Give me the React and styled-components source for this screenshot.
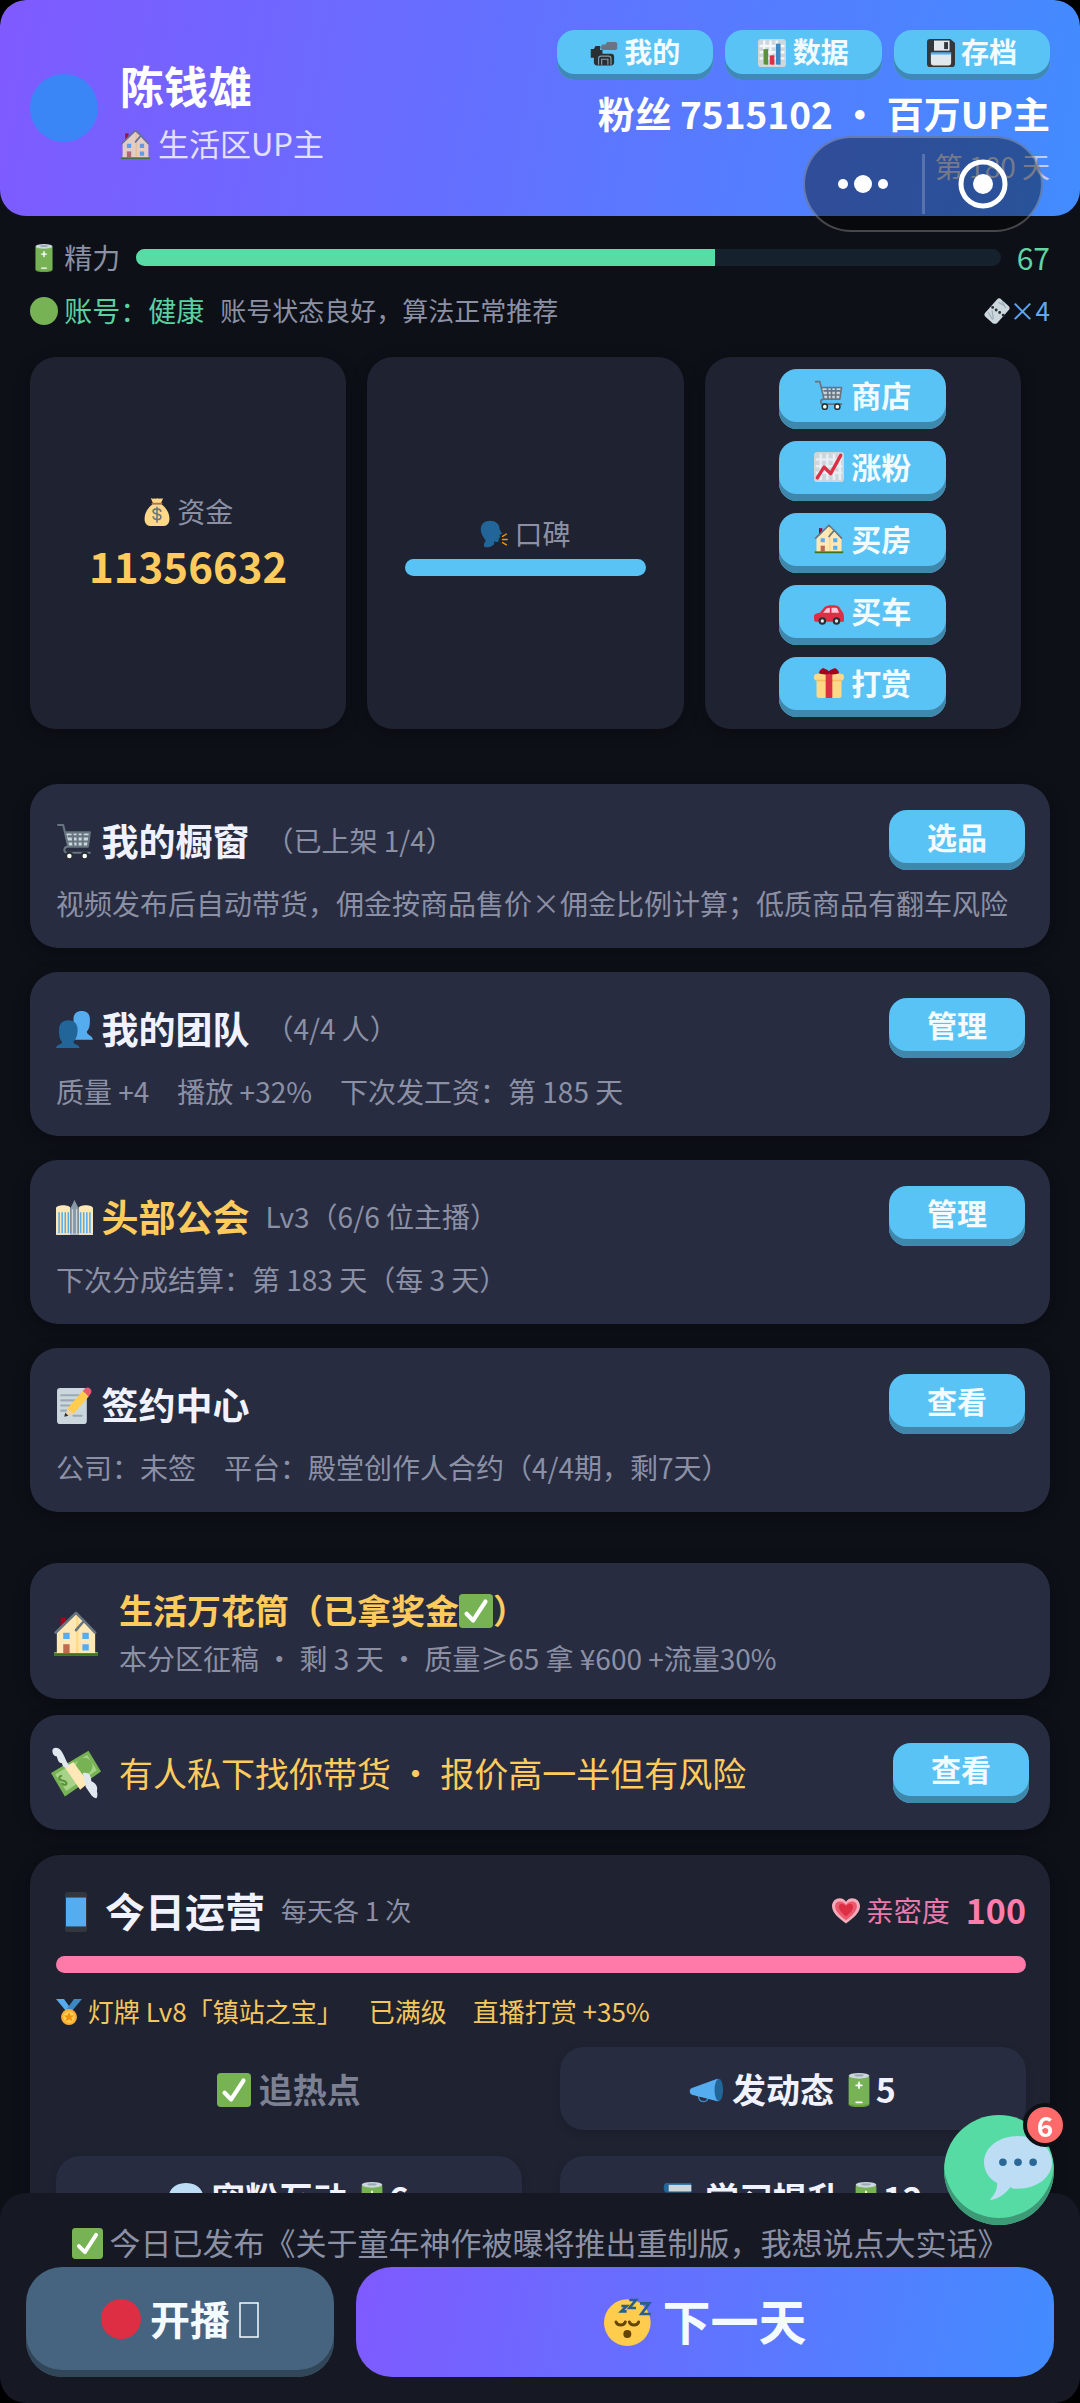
import React from 'react';
import styled, { createGlobalStyle, css } from 'styled-components';

const GlobalStyle = createGlobalStyle`
  * {
    box-sizing: border-box;
  }

  body {
    margin: 0;
    background: #000;
    color: #f0f2ff;
    font-family: 'Noto Sans CJK SC', 'Noto Sans', sans-serif;
    font-size: 28px;
    text-spacing-trim: space-all;
  }

  button {
    margin: 0;
    border: 0;
    font-family: inherit;
    cursor: pointer;
  }

  h1, h2, p {
    margin: 0;
  }
`;

/* ---------- emoji ---------- */

const houseArt = (
  <>
    <path fill="#77b255" d="M1 32h34v3H1z" />
    <path fill="#a0041e" d="M6 5h4v9H6z" />
    <path fill="#ffe8b6" d="M3 17 18 2l4 4 11 12v15H3z" />
    <path fill="#ffcc4d" opacity=".45" d="M18 2v31h2V2z" />
    <path fill="none" stroke="#66757f" strokeWidth="2" strokeLinecap="round" strokeLinejoin="round" d="M2 17 18 1.500l6 6L33 17M24 8l-6 7" />
    <path fill="#55acee" d="M8 17h5v5H8zM23 17h5v5h-5zM23 26h5v5h-5z" />
    <path fill="#c1694f" d="M8 26h5v7H8z" />
    <path fill="#3e721d" d="M1 33h34v2H1z" />
  </>
);

const art = {
  camera: (
    <>
      <path fill="#292f33" d="M1 13h4l2-4h6v5h3v8H7l-2 2H1z" />
      <rect fill="#292f33" x="5" y="19" width="26" height="15" rx="4" />
      <path fill="#66757f" d="M16 7h4l2-3h11l2 1v8l-2 1H16l-3-3z" />
      <path fill="none" stroke="#8899a6" strokeWidth="1.500" d="M11 33v-8a3 3 0 0 1 3-3h10a3 3 0 0 1 3 3v8M15 33v-7h8v7" />
    </>
  ),
  bars: (
    <>
      <rect fill="#ccd6dd" width="36" height="36" rx="4" />
      <path stroke="#f5f8fa" strokeWidth="3" d="M8 2v32M16 2v32M24 2v32M2 9h32M2 17h32M2 25h32" />
      <path fill="#5c913b" d="M7 13h6v20H7z" />
      <path fill="#dd2e44" d="M15 21h6v12h-6z" />
      <path fill="#3b88c3" d="M23 6h6v27h-6z" />
    </>
  ),
  floppy: (
    <>
      <path fill="#31373d" d="M4 0h26l6 5v27a4 4 0 0 1-4 4H4a4 4 0 0 1-4-4V4a4 4 0 0 1 4-4z" />
      <path fill="#e1e8ed" d="M9 2h20v13H9z" />
      <path fill="#31373d" d="M22 4h5v9h-5z" />
      <path fill="#e1e8ed" d="M5 18h26v13a3 3 0 0 1-3 3H8a3 3 0 0 1-3-3z" />
      <path fill="#55acee" d="M5 17h26v3H5z" />
    </>
  ),
  house: houseArt,
  battery: (
    <>
      <path fill="#77b255" d="M7 4h22v29c0 4-22 4-22 0z" />
      <path fill="#3e721d" opacity=".3" d="M7 32c3 3 19 3 22 0v2c-3 3-19 3-22 0z" />
      <ellipse fill="#ccd6dd" cx="18" cy="3" rx="11" ry="3" />
      <ellipse fill="#99aab5" cx="18" cy="2.500" rx="5" ry="1.300" />
      <path stroke="#fff" strokeWidth="1.800" strokeLinecap="round" d="M18 10v6M15 13h6M15 31h6" />
    </>
  ),
  green: <circle fill="#77b255" cx="18" cy="18" r="18" />,
  red: <circle fill="#dd2e44" cx="18" cy="18" r="18" />,
  ticket: (
    <>
      <path fill="#ccd6dd" d="M18 2c2-2 4-2 6 0l10 9c2 2 2 4 0 6L18 35c-2 1-4 1-6 0L2 26c-2-2-2-4 0-6z" />
      <path stroke="#99aab5" strokeWidth="1.500" d="m6 20 6 10M11 17l2 12M20 6l7 4M25 5l5 9" />
      <path stroke="#292f33" strokeWidth="4" strokeLinecap="round" strokeDasharray="0 6" d="m12 13 15 11" />
    </>
  ),
  money: (
    <>
      <path fill="#fdd888" d="M12 8C6 13 2 19 2 27c0 5 3 9 7 9h18c4 0 7-4 7-9 0-8-4-14-10-19z" />
      <path fill="#fdd888" d="M10 0c3 2 4 0 6 1 2-1 3-1 5 0 2-1 3 1 5-1l-3 7H13z" />
      <path fill="none" stroke="#bf6952" strokeWidth="2" strokeLinecap="round" d="M12 7h12" />
      <path fill="none" stroke="#67757f" strokeWidth="2" strokeLinecap="round" d="M23 17c-1-4-10-4-10 0 0 5 10 2 10 7 0 5-9 5-10 0M18 12v19" />
    </>
  ),
  speaking: (
    <>
      <path fill="#226699" d="M1 12C1 5 6 1 13 1s12 4 12 10c0 3 4 5 3 7l-3 1 1 3-2 2v3c-1 2-4 1-6 1 0 2 1 3-1 4-3 3-6 3-9 3-2 0-3-1-3-3 0-3 3-4 2-6-2-3-6-8-6-14z" />
      <path stroke="#f4900c" strokeWidth="1.800" strokeLinecap="round" d="m29 21 5-3M29 25h6M29 29l5 3" />
    </>
  ),
  cart: (
    <>
      <path fill="#ccd6dd" d="M9 10h24l-2 13H12z" />
      <path fill="none" stroke="#66757f" strokeWidth="2" strokeLinecap="round" strokeLinejoin="round" d="M2 2h5l5 21h19l2-14H9M12 13h20M12 18h20M16 9l1 14M21 9v14M26 9v14M12 23c-5 0-5 6-1 6h22" />
      <circle fill="#292f33" cx="13" cy="32" r="4" />
      <circle fill="#292f33" cx="28" cy="32" r="4" />
      <circle fill="#fff" cx="13" cy="32" r="2.200" />
      <circle fill="#fff" cx="28" cy="32" r="2.200" />
    </>
  ),
  trend: (
    <>
      <rect fill="#ccd6dd" width="36" height="36" rx="4" />
      <path stroke="#e8eef2" strokeWidth="3" d="M8 2v32M16 2v32M24 2v32M31 2v32M2 9h32M2 17h32M2 25h32" />
      <path fill="none" stroke="#dd2e44" strokeWidth="4" strokeLinecap="round" strokeLinejoin="round" d="m4 31 8-13 8 8L32 4" />
    </>
  ),
  car: (
    <>
      <path fill="#dd2e44" d="m7 20 6-7c2-2 13-3 17 0l4 6c2 2 2 6 2 10 0 2-1 2-2 2H2c-2 0-2-4-2-6 0-4 3-4 7-5z" />
      <path fill="#ffc8d6" d="m11 20 4-5 4-1v6zM21 14c3 0 6 0 7 1l2 5h-9z" />
      <circle fill="#292f33" cx="10" cy="30" r="4.500" />
      <circle fill="#292f33" cx="27" cy="30" r="4.500" />
      <circle fill="#e1e8ed" cx="10" cy="30" r="2" />
      <circle fill="#e1e8ed" cx="27" cy="30" r="2" />
    </>
  ),
  gift: (
    <>
      <rect fill="#fdd888" x="3" y="13" width="30" height="23" rx="3" />
      <rect fill="#fdd888" y="7" width="36" height="8" rx="4" />
      <path fill="#f4ab4b" opacity=".6" d="M3 14h30v2H3z" />
      <path fill="#dd2e44" d="M14 6h8v30h-8z" />
      <path fill="#a0041e" d="M18 7c-4 1-9 1-12-1 0-2 2-5 5-6 1 1 4 1 7 4 3-3 6-3 7-4 3 1 5 4 5 6-3 2-8 2-12 1z" />
    </>
  ),
  team: (
    <>
      <path fill="#55acee" d="M17 8c0-5 3-8 8-8s8 3 8 8c0 4 0 9-3 12 0 4 5 3 6 8H18z" />
      <path fill="#226699" d="M3 18c0-6 4-9 9-9s9 3 9 9c0 5-1 9-4 12 0 3 5 2 6 6H0c1-4 6-3 6-6-3-3-3-7-3-12z" />
    </>
  ),
  city: (
    <>
      <path fill="#ffe8b6" d="M0 9c0-4 14-4 14 0v26H0zM22 9c0-4 14-4 14 0v26H22z" />
      <path fill="#8899a6" d="m14 9 2-4 2-4 2 4 2 4v26h-8z" />
      <path stroke="#ccd6dd" strokeWidth="1.200" d="M16 10v24M20 10v24" />
      <path stroke="#55acee" strokeWidth="1.500" d="M3 13v20M6 13v20M9 13v20M12 13v20M24 13v20M27 13v20M30 13v20M33 13v20" />
      <path stroke="#d1d3d4" d="M0 34h36" />
    </>
  ),
  memo: (
    <>
      <rect fill="#ccd6dd" x="1" y="1" width="29" height="35" rx="3" />
      <path stroke="#99aab5" strokeWidth="2" strokeLinecap="round" d="M5 8h18M5 13h16M5 18h13M5 23h8M17 28h8" />
      <path fill="#ffcc4d" d="m11 21 15-17 6 5-15 17z" />
      <path fill="#ea596e" d="m26 4 3-3c3-2 7 2 5 5l-2 3z" />
      <path fill="#f3d2a2" d="m11 21 6 5-8 3z" />
      <path fill="#292f33" d="m9 25 3 3-4 1z" />
    </>
  ),
  check: (
    <>
      <rect fill="#77b255" width="36" height="36" rx="4" />
      <path fill="none" stroke="#fff" strokeWidth="4.500" strokeLinecap="round" strokeLinejoin="round" d="m8 21 7 7L28 8" />
    </>
  ),
  cash: (
    <>
      <path fill="#77b255" d="M0 18 27 2l9 15L10 35z" />
      <path fill="#a6d388" d="M3 19 26 5l7 11-22 15z" />
      <circle fill="#77b255" cx="24" cy="13" r="6" />
      <path fill="#ffe8b6" d="m10 14 6-4 11 15-6 5z" />
      <path fill="#e1e8ed" d="M1 2C1-1 6-1 8 3c3 5 3 8 6 10-4 3-6 0-6-2-3 0-3-3-4-5-2 0-3-2-3-4zM23 18c5-1 6 3 6 6 3 1 5 4 4 7 1 3 0 6-1 5-3-1-4-4-7-8z" />
      <path fill="none" stroke="#5c913b" strokeWidth="1.500" d="M8 20c-2 0-3 2-1 3s3 0 4 2-3 2-3 0" />
    </>
  ),
  phone: (
    <>
      <rect fill="#31373d" x="8" width="20" height="36" rx="3" />
      <path fill="#55acee" d="M9 5h18v26H9z" />
    </>
  ),
  heart: (
    <>
      <path fill="#f4abba" d="M18 34C9 28 0 20 0 12 0 1 13-2 18 6c5-8 18-5 18 6 0 8-9 16-18 22z" />
      <path fill="#ea596e" d="M18 30C10 24 4 18 4 12c0-8 10-8 14-2 4-6 14-6 14 2 0 6-6 12-14 18z" />
      <path fill="#dd2e44" d="M18 25c-5-4-9-8-9-12 0-6 7-5 9-1 2-4 9-5 9 1 0 4-4 8-9 12z" />
    </>
  ),
  medal: (
    <>
      <path fill="#55acee" d="M0 0h11l10 14-6 4z" />
      <path fill="#3b88c3" d="M36 0H25L14 15l7 3z" />
      <circle fill="#ffac33" cx="18" cy="25" r="11" />
      <circle fill="#ffcc4d" cx="18" cy="25" r="8" />
      <path fill="#f4900c" d="m18 18 2 5h5l-4 3 2 5-5-3-5 3 2-5-4-3h5z" />
    </>
  ),
  horn: (
    <>
      <path fill="none" stroke="#3b88c3" strokeWidth="1.500" d="M9 24c0 8 10 8 10 2" />
      <path fill="#55acee" d="M2 16 29 6c6 0 6 24 0 24L2 23c-3-1-3-6 0-7z" />
      <ellipse fill="#226699" cx="30.500" cy="18" rx="4.500" ry="12" />
    </>
  ),
  bubble: (
    <>
      <path fill="#bdddf4" d="M18 1c10 0 18 6 18 14s-8 14-18 14c-2 0-3 0-4-1-3 4-6 6-11 7 3-3 4-6 4-9C3 24 0 20 0 15 0 7 8 1 18 1z" />
      <circle fill="#2a6797" cx="10" cy="15" r="2" />
      <circle fill="#2a6797" cx="18" cy="15" r="2" />
      <circle fill="#2a6797" cx="26" cy="15" r="2" />
    </>
  ),
  books: (
    <>
      <path fill="#226699" d="M3 1h27v10H3C0 10 0 2 3 1z" />
      <path fill="#ccd6dd" d="M6 3h24v7H6z" />
      <path fill="#ffac33" d="M8 12h27v10H8z" />
      <path fill="#ccd6dd" d="M10 15h24v6H10z" />
      <path fill="#77b255" d="M2 23h30v12H2z" />
    </>
  ),
  sleep: (
    <>
      <circle fill="#ffcc4d" cx="17.500" cy="18.500" r="17.500" />
      <path fill="none" stroke="#664500" strokeWidth="2.200" strokeLinecap="round" d="M9 18c1 3 6 3 7 0M19 18c1 3 6 3 7 0" />
      <circle fill="#664500" cx="17.500" cy="27" r="3" />
      <path fill="none" stroke="#26608b" strokeWidth="2" d="M13 6h4l-4 4h4M19 1.500h5l-5 6h5M27 4h7l-6 8h7" />
    </>
  ),
};

const Svg = styled.svg`
  width: 1em;
  height: 1em;
  flex: none;
  vertical-align: -0.12em;
  overflow: visible;
`;

const MissingGlyph = styled(Svg)`
  width: 20px;
`;

const Emoji = ({ name }) => (
  <Svg viewBox="0 0 36 36" aria-hidden="true">{art[name]}</Svg>
);

/* ---------- layout ---------- */

const Screen = styled.div`
  height: 100vh;
  display: flex;
  flex-direction: column;
  background: #0d1017;
  border-radius: 26px;
  overflow: hidden;
`;

const Header = styled.header`
  flex: none;
  display: flex;
  justify-content: space-between;
  align-items: center;
  padding: 30px;
  border-radius: 26px;
  background: linear-gradient(100deg, #7f5aff, #428cff);
`;

const Profile = styled.div`
  display: flex;
  align-items: center;
  gap: 22px;
`;

const Avatar = styled.div`
  width: 68px;
  height: 68px;
  border-radius: 50%;
  background: #3a86f7;
`;

const UserName = styled.h1`
  font-size: 44px;
  line-height: 60px;
  color: #fff;
`;

const UserZone = styled.p`
  margin-top: 10px;
  font-size: 31px;
  line-height: 36px;
  color: #fff;
  opacity: 0.8;
`;

const Summary = styled.div`
  display: flex;
  flex-direction: column;
  align-items: flex-end;
  gap: 9px;
`;

const HeaderNav = styled.nav`
  display: flex;
  gap: 12px;
`;

const Fans = styled.p`
  font-size: 37px;
  font-weight: 700;
  line-height: 48px;
  color: #fff;
`;

const Day = styled.p`
  font-size: 28px;
  line-height: 40px;
  color: #c4cbe6;
`;

const Button = styled.button`
  flex: none;
  height: 60px;
  padding: 0 38px 9px;
  border-radius: 18px;
  background: #59c3f5;
  box-shadow: inset 0 -7px 0 #3f88ab;
  color: #f4fbff;
  font-size: 30px;
  font-weight: 700;
  line-height: 1;

  ${props => props.$kind === 'nav' && css`
    height: 50px;
    padding: 0 33px 6px;
    box-shadow: inset 0 -6px 0 #3f88b8;
    font-size: 28px;
  `}
  ${props => props.$kind === 'shop' && css`padding: 0 35px 9px;`}
`;

const Capsule = styled.div`
  position: fixed;
  top: 136px;
  right: 37px;
  z-index: 5;
  display: flex;
  align-items: center;
  width: 240px;
  height: 96px;
  border: 2px solid rgba(255, 255, 255, 0.25);
  border-radius: 48px;
  background: rgba(0, 0, 0, 0.4);
`;

const CapsuleButton = styled.button`
  flex: 1;
  display: flex;
  justify-content: center;
  padding: 0;
  background: none;

  & + & {
    border-left: 3px solid rgba(255, 255, 255, 0.2);
  }
`;

const Content = styled.main`
  flex: 1;
  min-height: 0;
  overflow-y: auto;
  scrollbar-width: none;
  padding: 21px 30px 0;
`;

const StatusRow = styled.div`
  display: flex;
  align-items: center;
  gap: 16px;
  margin-bottom: 13px;
  line-height: 40px;
  color: ${props => props.$color || '#8b90a5'};
`;

const StatusNote = styled.span`
  flex: 1;
  font-size: 26px;
  color: #8b90a5;
`;

const Track = styled.div`
  flex: ${props => (props.$grow ? '1' : 'none')};
  height: 17px;
  border-radius: 9px;
  background: #15222d;
  overflow: hidden;
`;

const Fill = styled.div`
  height: 100%;
  background: ${props => props.$color};
`;

const Tinted = styled.span`
  font-size: ${props => props.$size || '28px'};
  color: ${props => props.$color};
`;

const Stats = styled.section`
  display: grid;
  grid-template-columns: repeat(3, 1fr);
  gap: 21px;
  margin: 27px 29px 55px 0;
`;

const Stat = styled.div`
  display: flex;
  flex-direction: column;
  justify-content: center;
  padding: 12px 38px;
  border-radius: 26px;
  background: #1f2231;
  box-shadow: 0 4px 16px rgba(0, 0, 0, 0.3);
  text-align: center;

  ${Track} {
    margin-top: 4px;
  }
`;

const StatLabel = styled.p`
  line-height: 44px;
  color: #8b90a5;
`;

const Money = styled.strong`
  font-size: 42px;
  line-height: 64px;
  color: #ffcb5c;
`;

const ShopList = styled.div`
  display: flex;
  flex-direction: column;
  align-items: center;
  gap: 12px;
`;

const CardList = styled.section`
  display: grid;
  gap: ${props => props.$gap};
  margin-bottom: ${props => props.$after};
`;

const Card = styled.article`
  padding: 26px 25px 25px 26px;
  border-radius: 28px;
  background: #282c40;
  box-shadow: 0 4px 16px rgba(0, 0, 0, 0.3);
`;

const CardHead = styled.div`
  display: flex;
  align-items: center;
  gap: 16px;
  margin-bottom: 13px;
`;

const CardTitle = styled.h2`
  font-size: 37px;
  line-height: 60px;
  color: ${props => props.$color || '#f0f2ff'};
`;

const Muted = styled.span`
  flex: 1;
  font-size: ${props => props.$size || '28px'};
  color: #8b90a5;
`;

const CardText = styled.p`
  line-height: 40px;
  color: #8b90a5;
`;

const Notice = styled.article`
  display: flex;
  align-items: center;
  gap: 17px;
  min-height: ${props => (props.$tall ? '136px' : '115px')};
  padding: ${props => (props.$tall ? '6px' : '0')} 21px 0 20px;
  border-radius: 28px;
  background: #282c40;
  box-shadow: 0 4px 16px rgba(0, 0, 0, 0.3);
`;

const NoticeIcon = styled.div`
  display: flex;
  justify-content: center;
  width: 52px;
  font-size: ${props => props.$size};
`;

const NoticeBody = styled.div`
  flex: 1;
  line-height: 48px;
`;

const NoticeTitle = styled.p`
  font-size: 34px;
  font-weight: ${props => (props.$bold ? 700 : 400)};
  color: #ffcb5c;
`;

const Panel = styled.section`
  padding: 25px 24px 26px 26px;
  border-radius: 30px;
  background: #1f2231;
  box-shadow: 0 4px 16px rgba(0, 0, 0, 0.3);
`;

const PanelHead = styled.div`
  display: flex;
  align-items: center;
  gap: 16px;
  margin-bottom: 16px;
  line-height: 60px;
`;

const PanelTitle = styled.h2`
  font-size: 40px;
`;

const Intimacy = styled.strong`
  font-size: 34px;
  color: #ff7dab;
`;

const Medal = styled.p`
  margin: 20px 0 18px;
  font-size: 26px;
  line-height: 36px;
  color: #f5c65c;
`;

const Actions = styled.div`
  display: grid;
  grid-template-columns: 1fr 1fr;
  gap: 26px 38px;
`;

const Action = styled.button`
  height: 83px;
  padding: 0;
  border-radius: 24px;
  background: #282c40;
  box-shadow: 0 3px 8px rgba(0, 0, 0, 0.15);
  color: #f0f2ff;
  font-size: 34px;
  font-weight: 700;

  &:disabled {
    background: none;
    box-shadow: none;
    color: #7c8093;
  }
`;

const Footer = styled.footer`
  flex: none;
  padding: 26px;
  border-radius: 26px;
  background: #161924;
`;

const Published = styled.p`
  margin-bottom: 2px;
  font-size: 31px;
  line-height: 46px;
  text-align: center;
  white-space: nowrap;
  color: #8b90a5;
`;

const FooterButtons = styled.div`
  display: grid;
  grid-template-columns: 308fr 698fr;
  gap: 22px;
`;

const LiveButton = styled.button`
  height: 110px;
  padding: 0 0 9px;
  border-radius: 36px;
  background: #46647f;
  box-shadow: inset 0 -7px 0 #314659;
  color: #f4fbff;
  font-size: 40px;
  font-weight: 700;
`;

const NextButton = styled(LiveButton)`
  padding: 0 0 6px;
  background: linear-gradient(100deg, #7f5aff, #428cff);
  box-shadow: none;
  font-size: 48px;
`;

const Chat = styled.button`
  position: fixed;
  right: 26px;
  bottom: 178px;
  z-index: 5;
  display: flex;
  align-items: center;
  justify-content: flex-end;
  width: 110px;
  height: 110px;
  padding: 0 2px 4px 0;
  border-radius: 50%;
  background: #56dba4;
  box-shadow: inset 0 -7px 0 #3d9a76;
  font-size: 68px;
`;

const Badge = styled.span`
  position: absolute;
  top: -12px;
  right: -13px;
  width: 44px;
  height: 44px;
  border: 4px solid #0d1017;
  border-radius: 50%;
  background: #ff6b6b;
  color: #fff;
  font-size: 28px;
  font-weight: 700;
  line-height: 36px;
`;

const shops = [
  { icon: 'cart', text: '商店' },
  { icon: 'trend', text: '涨粉' },
  { icon: 'house', text: '买房' },
  { icon: 'car', text: '买车' },
  { icon: 'gift', text: '打赏' },
];

const cards = [
  {
    icon: 'cart',
    title: '我的橱窗',
    sub: '（已上架 1/4）',
    action: '选品',
    text: '视频发布后自动带货，佣金按商品售价×佣金比例计算；低质商品有翻车风险',
  },
  {
    icon: 'team',
    title: '我的团队',
    sub: '（4/4 人）',
    action: '管理',
    text: '质量 +4　播放 +32%　下次发工资：第 185 天',
  },
  {
    icon: 'city',
    title: '头部公会',
    color: '#ffcb5c',
    sub: 'Lv3（6/6 位主播）',
    action: '管理',
    text: '下次分成结算：第 183 天（每 3 天）',
  },
  {
    icon: 'memo',
    title: '签约中心',
    sub: '',
    action: '查看',
    text: '公司：未签　平台：殿堂创作人合约（4/4期，剩7天）',
  },
];

const actions = [
  { icon: 'check', text: '追热点', done: true },
  { icon: 'horn', text: '发动态', cost: 5 },
  { icon: 'bubble', text: '宠粉互动', cost: 6 },
  { icon: 'books', text: '学习提升', cost: 12 },
];

const Bar = ({ value, color, grow }) => (
  <Track $grow={grow}>
    <Fill $color={color} style={{ width: `${value}%` }} />
  </Track>
);

const App = () => (
  <>
    <GlobalStyle />
    <Screen>
      <Header>
        <Profile>
          <Avatar />
          <div>
            <UserName>陈钱雄</UserName>
            <UserZone><Emoji name="house" /> 生活区UP主</UserZone>
          </div>
        </Profile>
        <Summary>
          <HeaderNav>
            <Button $kind="nav"><Emoji name="camera" /> 我的</Button>
            <Button $kind="nav"><Emoji name="bars" /> 数据</Button>
            <Button $kind="nav"><Emoji name="floppy" /> 存档</Button>
          </HeaderNav>
          <Fans>粉丝 7515102 · 百万UP主</Fans>
          <Day>第 180 天</Day>
        </Summary>
      </Header>

      <Capsule>
        <CapsuleButton aria-label="更多">
          <svg width="60" height="60" viewBox="0 0 60 60" fill="#fff">
            <circle cx="10" cy="30" r="5" />
            <circle cx="30" cy="30" r="9" />
            <circle cx="50" cy="30" r="5" />
          </svg>
        </CapsuleButton>
        <CapsuleButton aria-label="关闭">
          <svg width="60" height="60" viewBox="0 0 60 60" fill="#fff">
            <circle cx="30" cy="30" r="22" fill="none" stroke="#fff" strokeWidth="5" />
            <circle cx="30" cy="30" r="10" />
          </svg>
        </CapsuleButton>
      </Capsule>

      <Content>
        <StatusRow>
          <span><Emoji name="battery" /> 精力</span>
          <Bar value={67} color="#59dba5" grow />
          <Tinted $color="#62d3a2" $size="30px">67</Tinted>
        </StatusRow>
        <StatusRow $color="#5bd0a0">
          <span><Emoji name="green" /> 账号：健康</span>
          <StatusNote>账号状态良好，算法正常推荐</StatusNote>
          <Tinted $color="#62a8ec" $size="26px"><Emoji name="ticket" />×4</Tinted>
        </StatusRow>

        <Stats>
          <Stat>
            <StatLabel><Emoji name="money" /> 资金</StatLabel>
            <Money>11356632</Money>
          </Stat>
          <Stat>
            <StatLabel><Emoji name="speaking" /> 口碑</StatLabel>
            <Bar value={100} color="#59c3f5" />
          </Stat>
          <Stat>
            <ShopList>
              {shops.map(shop => (
                <Button key={shop.text} $kind="shop"><Emoji name={shop.icon} /> {shop.text}</Button>
              ))}
            </ShopList>
          </Stat>
        </Stats>

        <CardList $gap="24px" $after="51px">
          {cards.map(card => (
            <Card key={card.title}>
              <CardHead>
                <CardTitle $color={card.color}><Emoji name={card.icon} /> {card.title}</CardTitle>
                <Muted>{card.sub}</Muted>
                <Button>{card.action}</Button>
              </CardHead>
              <CardText>{card.text}</CardText>
            </Card>
          ))}
        </CardList>

        <CardList $gap="16px" $after="25px">
          <Notice $tall>
            <NoticeIcon $size="46px"><Emoji name="house" /></NoticeIcon>
            <NoticeBody>
              <NoticeTitle $bold>生活万花筒（已拿奖金<Emoji name="check" />）</NoticeTitle>
              <Muted>本分区征稿 · 剩 3 天 · 质量≥65 拿 ¥600 +流量30%</Muted>
            </NoticeBody>
          </Notice>
          <Notice>
            <NoticeIcon $size="50px"><Emoji name="cash" /></NoticeIcon>
            <NoticeBody>
              <NoticeTitle>有人私下找你带货 · 报价高一半但有风险</NoticeTitle>
            </NoticeBody>
            <Button>查看</Button>
          </Notice>
        </CardList>

        <Panel>
          <PanelHead>
            <PanelTitle><Emoji name="phone" /> 今日运营</PanelTitle>
            <Muted $size="26px">每天各 1 次</Muted>
            <Tinted $color="#e87bab"><Emoji name="heart" /> 亲密度</Tinted>
            <Intimacy>100</Intimacy>
          </PanelHead>
          <Bar value={100} color="#ff7aa9" />
          <Medal><Emoji name="medal" /> 灯牌 Lv8「镇站之宝」　已满级　直播打赏 +35%</Medal>
          <Actions>
            {actions.map(item => (
              <Action key={item.text} disabled={item.done}>
                <Emoji name={item.icon} /> {item.text}
                {item.cost && <> <Emoji name="battery" />{item.cost}</>}
              </Action>
            ))}
          </Actions>
        </Panel>
      </Content>

      <Footer>
        <Published><Emoji name="check" /> 今日已发布《关于童年神作被曝将推出重制版，我想说点大实话》</Published>
        <FooterButtons>
          <LiveButton>
            <Emoji name="red" /> 开播{' '}
            <MissingGlyph viewBox="0 0 20 40" aria-hidden="true">
              <rect x="1" y="4" width="18" height="34" fill="none" stroke="#f4fbff" strokeWidth="1.500" />
            </MissingGlyph>
          </LiveButton>
          <NextButton><Emoji name="sleep" /> 下一天</NextButton>
        </FooterButtons>
      </Footer>

      <Chat aria-label="消息">
        <Emoji name="bubble" />
        <Badge>6</Badge>
      </Chat>
    </Screen>
  </>
);

export default App;
